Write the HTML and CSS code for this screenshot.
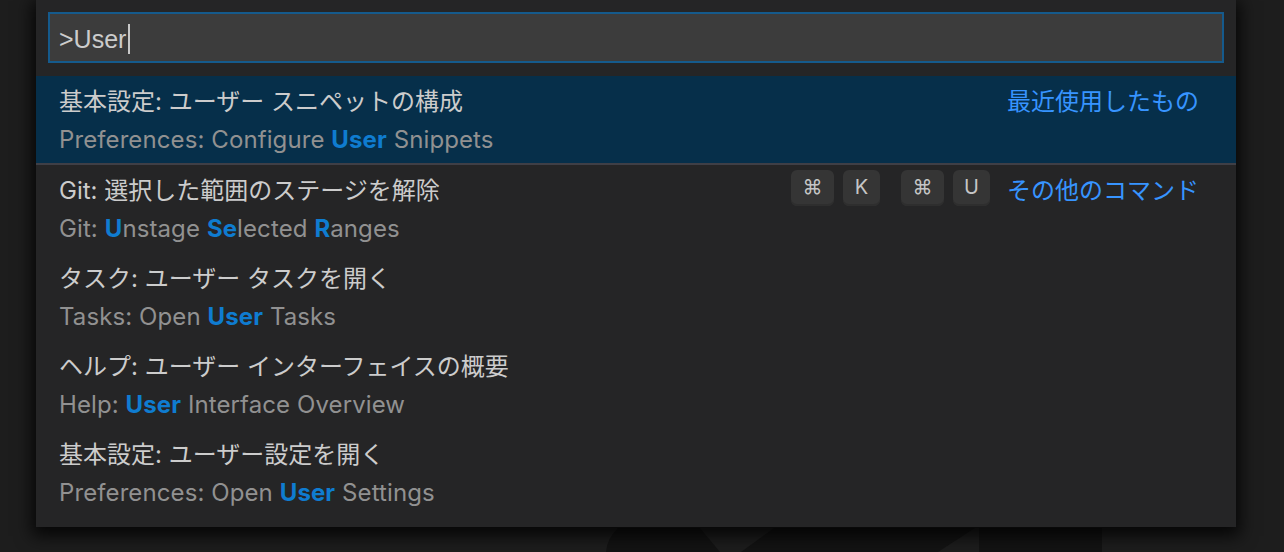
FILE: index.html
```html
<!DOCTYPE html>
<html lang="ja">
<head>
<meta charset="utf-8">
<link rel="stylesheet" href="styles.css">
</head>
<body>
<svg class="watermark" width="1284" height="552" viewBox="0 0 1284 552">
  <path d="M618 528 L700 528 L720 552 L606 552 Q607 538 618 528 Z" fill="#131313"/>
  <path d="M774 528 L975 528 L938 552 L741 552 Z" fill="#131313"/>
  <rect x="979" y="528" width="123" height="24" fill="#131313"/>
</svg>
<div class="palette">
  <div class="input-wrap">
    <div class="input"><span class="query">&gt;User</span><span class="caret"></span></div>
  </div>
  <div class="list">
    <div class="item selected">
      <div class="line1"><span class="label">基本設定: ユーザー スニペットの構成</span><span class="side">最近使用したもの</span></div>
      <div class="line2"><span>Preferences: Configure <b class="hl">User</b> Snippets</span></div>
    </div>
    <div class="item">
      <div class="line1"><span class="label">Git: 選択した範囲のステージを解除</span>
        <span class="keys">
          <span class="chord"><kbd class="key wide">⌘</kbd><kbd class="key">K</kbd></span>
          <span class="chord"><kbd class="key wide">⌘</kbd><kbd class="key">U</kbd></span>
        </span>
        <span class="side">その他のコマンド</span></div>
      <div class="line2"><span>Git: <b class="hl">U</b>nstage <b class="hl">Se</b>lected <b class="hl">R</b>anges</span></div>
    </div>
    <div class="item">
      <div class="line1"><span class="label">タスク: ユーザー タスクを開く</span></div>
      <div class="line2"><span>Tasks: Open <b class="hl">User</b> Tasks</span></div>
    </div>
    <div class="item">
      <div class="line1"><span class="label">ヘルプ: ユーザー インターフェイスの概要</span></div>
      <div class="line2"><span>Help: <b class="hl">User</b> Interface Overview</span></div>
    </div>
    <div class="item">
      <div class="line1"><span class="label">基本設定: ユーザー設定を開く</span></div>
      <div class="line2"><span>Preferences: Open <b class="hl">User</b> Settings</span></div>
    </div>
  </div>
</div>
</body>
</html>
```

FILE: styles.css
```css
html, body {
  margin: 0;
  padding: 0;
  width: 1284px;
  height: 552px;
  overflow: hidden;
  background: #1d1d1d;
  font-family: "Inter", "Noto Sans CJK JP", sans-serif;
}

.watermark {
  position: absolute;
  left: 0;
  top: 0;
}

.palette {
  position: relative;
  margin-left: 36px;
  width: 1200px;
  background: #252526;
  padding: 12px 0 10px;
  box-sizing: border-box;
  box-shadow: 0 5px 16px 4px rgba(0, 0, 0, 0.8);
}

.input-wrap {
  padding: 0 12px;
}

.input {
  height: 51px;
  box-sizing: border-box;
  border: 2px solid #155a8c;
  background: #3c3c3c;
  display: flex;
  align-items: center;
  padding: 3px 0 0 9px;
}

.query {
  color: #cccccc;
  font-size: 25px;
  font-family: "Liberation Sans", sans-serif;
}

.caret {
  width: 2px;
  height: 30px;
  background: #c8c8c8;
  margin-left: 2px;
}

.list {
  margin-top: 13px;
}

.item {
  height: 88px;
  box-sizing: border-box;
  padding: 3px 37px 5px 23px;
}

.item.selected {
  background: #062f4a;
  height: 89px;
  border-bottom: 2px solid #3f3f46;
}

.line1, .line2 {
  height: 40px;
  display: flex;
  align-items: center;
  white-space: nowrap;
}

.line1 {
  color: #cccccc;
  font-size: 24px;
}

.label {
  flex: 1;
}

.line2 {
  color: #919191;
  font-size: 24px;
  letter-spacing: 0.1px;
}

.hl {
  color: #0f7cd0;
  font-weight: 700;
}

.side {
  color: #3794ff;
}

.keys {
  display: flex;
  gap: 21px;
  margin-right: 17px;
}

.chord {
  display: flex;
  gap: 9px;
}

.key {
  font-family: "Inter", "DejaVu Sans", sans-serif;
  font-size: 20px;
  color: #c5c5c5;
  background: #353535;
  border-radius: 6px;
  box-shadow: inset 0 -2px 0 #2e2e2e;
  height: 36px;
  width: 37px;
  display: flex;
  align-items: center;
  justify-content: center;
  box-sizing: border-box;
  padding-bottom: 2px;
}

.key.wide {
  width: 43px;
}
```
